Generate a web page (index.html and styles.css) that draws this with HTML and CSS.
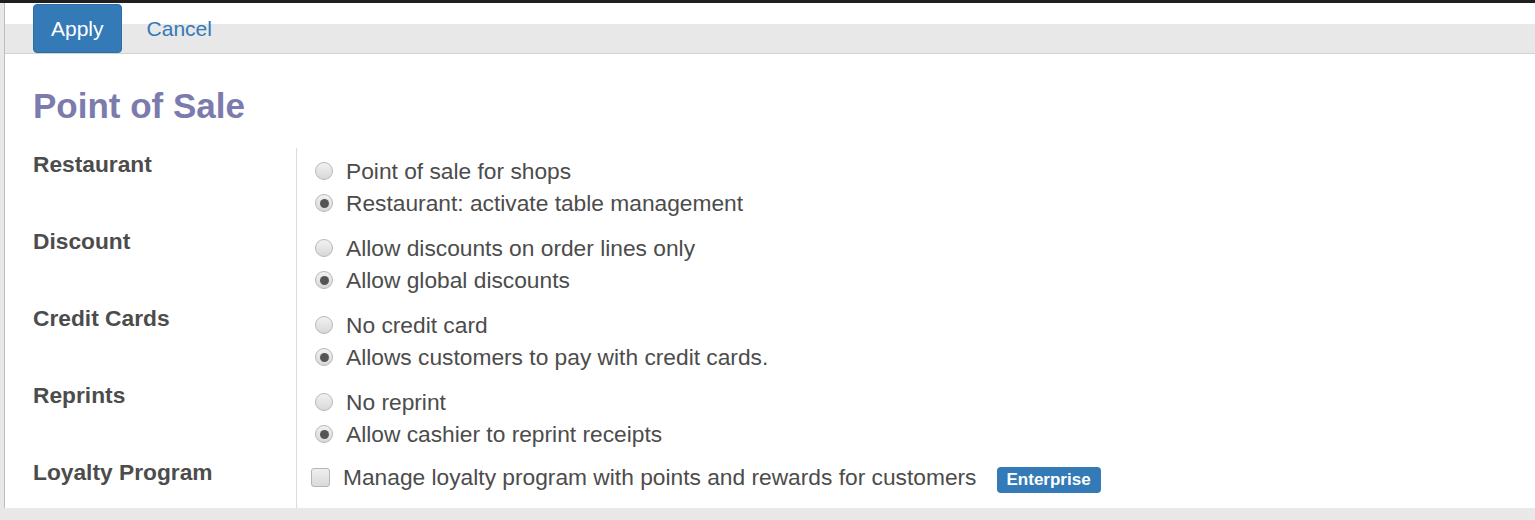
FILE: index.html
```html
<!DOCTYPE html>
<html lang="en">
<head>
  <meta charset="UTF-8">
  <title>Point of Sale Settings</title>
  <link rel="stylesheet" href="styles.css">
</head>
<body>
  <div class="topbar"></div>
  <div class="page">
    <div class="control-panel">
      <button class="btn-apply">Apply</button>
      <a class="btn-cancel">Cancel</a>
    </div>

    <div class="content">
      <h1 class="title">Point of Sale</h1>

      <div class="setting">
        <div class="setting-label">Restaurant</div>
        <div class="setting-options">
          <label class="option"><span class="radio"></span>Point of sale for shops</label>
          <label class="option"><span class="radio checked"></span>Restaurant: activate table management</label>
        </div>
      </div>

      <div class="setting">
        <div class="setting-label">Discount</div>
        <div class="setting-options">
          <label class="option"><span class="radio"></span>Allow discounts on order lines only</label>
          <label class="option"><span class="radio checked"></span>Allow global discounts</label>
        </div>
      </div>

      <div class="setting">
        <div class="setting-label">Credit Cards</div>
        <div class="setting-options">
          <label class="option"><span class="radio"></span>No credit card</label>
          <label class="option"><span class="radio checked"></span>Allows customers to pay with credit cards.</label>
        </div>
      </div>

      <div class="setting">
        <div class="setting-label">Reprints</div>
        <div class="setting-options">
          <label class="option"><span class="radio"></span>No reprint</label>
          <label class="option"><span class="radio checked"></span>Allow cashier to reprint receipts</label>
        </div>
      </div>

      <div class="setting last">
        <div class="setting-label">Loyalty Program</div>
        <div class="setting-options">
          <label class="option"><span class="checkbox"></span>Manage loyalty program with points and rewards for customers<span class="badge">Enterprise</span></label>
        </div>
      </div>
    </div>
  </div>
</body>
</html>
```

FILE: styles.css
```css
body {
  margin: 0;
  background-color: #e8e8e8;
  font-family: "Liberation Sans", Arial, sans-serif;
  color: #4c4c4c;
}
.topbar {
  height: 3px;
  background-color: #1f1f1f;
}
.page {
  margin-left: 4px;
  border-left: 1px solid #bdbdbd;
  background-color: #fff;
}
.control-panel {
  display: flex;
  align-items: center;
  height: 49px;
  padding: 1px 0 0 28px;
  background: linear-gradient(#fff 21px, #e8e8e8 21px);
  border-bottom: 1px solid #d2d2d2;
}
.btn-apply {
  height: 49px;
  padding: 0 17px;
  border: 1px solid #2e6da4;
  border-radius: 4px;
  background-color: #337ab7;
  color: #fff;
  font-family: inherit;
  font-size: 21px;
}
.btn-cancel {
  padding: 0 19px 0 25px;
  color: #337ab7;
  font-size: 21px;
}
.title {
  margin: 32px 0 22px 28px;
  font-size: 35px;
  line-height: 40px;
  color: #7c7bad;
}
.setting {
  display: flex;
}
.setting-label {
  width: 291px;
  padding-left: 28px;
  box-sizing: border-box;
  font-size: 22.75px;
  font-weight: bold;
  line-height: 32px;
}
.setting-options {
  flex: 1;
  padding: 7px 0 6px 18px;
  border-left: 1px solid #dcdcdc;
}
.setting.last .setting-options {
  padding: 5px 0 15px 14px;
}
.option {
  display: flex;
  align-items: center;
  height: 32px;
  font-size: 22.75px;
}
.radio {
  position: relative;
  width: 16px;
  height: 16px;
  margin-right: 13px;
  border: 1px solid #b8b8b8;
  border-radius: 50%;
  background: linear-gradient(#f2f2f2, #d8d8d8);
}
.radio.checked::after {
  content: "";
  position: absolute;
  left: 3.5px;
  top: 3.5px;
  width: 9px;
  height: 9px;
  border-radius: 50%;
  background-color: #555;
}
.checkbox {
  width: 17px;
  height: 17px;
  margin-right: 13px;
  border: 1px solid #b5b5b5;
  border-radius: 3px;
  background: linear-gradient(#efefef, #dadada);
}
.badge {
  margin: 6px 0 0 20px;
  padding: 0 10px;
  height: 26px;
  line-height: 26px;
  border-radius: 4px;
  background-color: #337ab7;
  color: #fff;
  font-size: 17px;
  font-weight: bold;
}
```
